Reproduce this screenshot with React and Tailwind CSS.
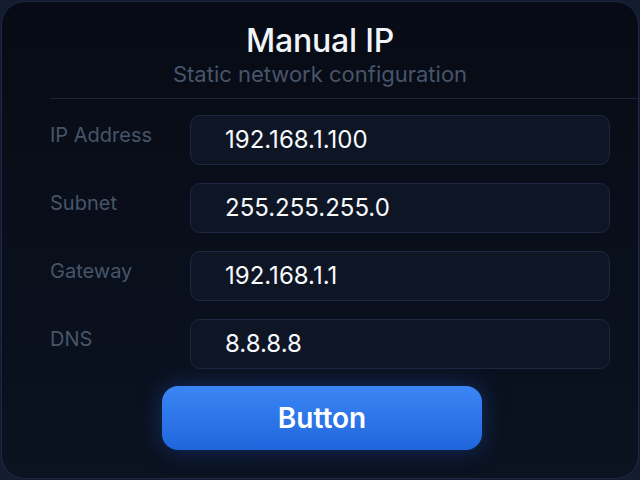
export default function App() {
  const rows = [
    ["IP Address", "192.168.1.100"],
    ["Subnet", "255.255.255.0"],
    ["Gateway", "192.168.1.1"],
    ["DNS", "8.8.8.8"],
  ];
  return (
    <div className="w-[640px] h-[480px] bg-[#131c30] p-px" style={{ fontFamily: "Inter, 'Noto Sans', sans-serif" }}>
      <div className="h-[478px] w-[638px] rounded-[24px] border border-[#1d2740] bg-gradient-to-b from-[#070b15] to-[#0b1220] flex flex-col overflow-hidden">
        <div className="pt-[19px] text-center text-[32px] leading-[40px] font-medium text-[#f1f5f9] tracking-[-0.2px]">Manual IP</div>
        <div className="text-center text-[22px] leading-[26px] text-[#475569]">Static network configuration</div>
        <div className="mt-[11px] ml-[48px] h-px bg-[#1b2438]" />
        <div className="mt-[16px] ml-[48px] flex flex-col gap-[18px]">
          {rows.map(([label, value]) => (
            <div key={label} className="flex items-start">
              <div className="w-[140px] pt-[6px] text-[20px] leading-[28px] text-[#475569]">{label}</div>
              <div className="w-[420px] h-[50px] rounded-[10px] border border-[#1c2740] bg-[#0e1626] flex items-center pl-[34px] text-[24px] text-[#f8fafc]">
                {value}
              </div>
            </div>
          ))}
        </div>
        <div className="mt-[17px] ml-[160px] w-[320px] h-[64px] rounded-[16px] bg-gradient-to-b from-[#3b86f6] to-[#1f66dc] flex items-center justify-center text-[28px] font-semibold text-white shadow-[0_0_24px_rgba(37,99,235,0.35)]">
          Button
        </div>
      </div>
    </div>
  );
}
